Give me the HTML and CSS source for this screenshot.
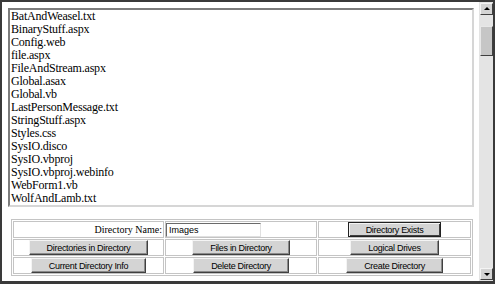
FILE: index.html
```html
<!DOCTYPE html>
<html lang="en">
<head>
    <meta charset="UTF-8">
    <title>SysIO</title>
    <link rel="stylesheet" href="styles.css">
</head>
<body>
    <div class="frame">
        <div class="main">
            <div class="listbox">
                <div>BatAndWeasel.txt</div>
                <div>BinaryStuff.aspx</div>
                <div>Config.web</div>
                <div>file.aspx</div>
                <div>FileAndStream.aspx</div>
                <div>Global.asax</div>
                <div>Global.vb</div>
                <div>LastPersonMessage.txt</div>
                <div>StringStuff.aspx</div>
                <div>Styles.css</div>
                <div>SysIO.disco</div>
                <div>SysIO.vbproj</div>
                <div>SysIO.vbproj.webinfo</div>
                <div>WebForm1.vb</div>
                <div>WolfAndLamb.txt</div>
            </div>

            <div class="controls">
                <div class="cell label-cell">Directory Name:</div>
                <div class="cell left-cell"><input type="text" class="dir-input" value="Images"></div>
                <div class="cell"><button class="btn default">Directory Exists</button></div>

                <div class="cell"><button class="btn">Directories in Directory</button></div>
                <div class="cell"><button class="btn">Files in Directory</button></div>
                <div class="cell"><button class="btn">Logical Drives</button></div>

                <div class="cell"><button class="btn">Current Directory Info</button></div>
                <div class="cell"><button class="btn">Delete Directory</button></div>
                <div class="cell"><button class="btn">Create Directory</button></div>
            </div>
        </div>

        <div class="scrollbar">
            <div class="arrow up"></div>
            <div class="thumb"></div>
            <div class="track"></div>
            <div class="arrow down"></div>
        </div>
    </div>
</body>
</html>
```

FILE: styles.css
```css
/* Page */
body, html {
    margin: 0;
    padding: 0;
    background: #fff;
}

.frame {
    width: 495px;
    height: 284px;
    box-sizing: border-box;
    border: 2px solid #3a3a3a;
    border-bottom-width: 3px;
    display: flex;
    background: #fff;
}

.main {
    flex: 1;
    padding: 6px 5px 0 6px;
}

/* File list box */
.listbox {
    height: 199px;
    box-sizing: border-box;
    border: 2px solid;
    border-color: #7c7c7c #d6d6d6 #d6d6d6 #7c7c7c;
    padding: 0 1px;
    overflow: hidden;
    font-family: "Liberation Serif", serif;
    font-size: 12px;
    line-height: 13px;
    letter-spacing: -0.2px;
    color: #000;
}

/* Button table */
.controls {
    margin: 12px 1px 0 3px;
    border: 1px solid #c4c4c4;
    padding: 1px;
    display: grid;
    grid-template-columns: 151px 152px 1fr;
    grid-auto-rows: 17px;
    gap: 1px;
}

.cell {
    border: 1px solid #c4c4c4;
    display: flex;
    align-items: center;
    justify-content: center;
}

.label-cell {
    justify-content: flex-end;
    padding-right: 1px;
    font-family: "Liberation Serif", serif;
    font-size: 10px;
}

.left-cell {
    justify-content: flex-start;
}

.dir-input {
    width: 95px;
    height: 14px;
    box-sizing: border-box;
    border: 1px solid;
    border-color: #6a6a6a #e0e0e0 #e0e0e0 #6a6a6a;
    padding: 0 2px;
    font-family: "Liberation Sans", sans-serif;
    font-size: 9px;
    outline: none;
}

.btn {
    height: 15px;
    padding: 0 17px;
    background: #d4d4d4;
    border: 1px solid;
    border-color: #f4f4f4 #404040 #404040 #f4f4f4;
    box-shadow: inset -1px -1px 0 #8a8a8a;
    font-family: "Liberation Sans", sans-serif;
    font-size: 9px;
    letter-spacing: -0.3px;
    color: #000;
    line-height: 12px;
}

.btn.default {
    border-color: #202020;
    box-shadow: inset 1px 1px 0 #f4f4f4, inset -1px -1px 0 #404040;
}

/* Scroll bar */
.scrollbar {
    width: 13px;
    background: #e4e4e4;
    display: flex;
    flex-direction: column;
    padding: 1px 0 1px 1px;
}

.arrow {
    height: 10px;
    width: 11px;
    background: #d4d4d4;
    border: 1px solid;
    border-color: #f4f4f4 #404040 #404040 #f4f4f4;
    position: relative;
}

.arrow::after {
    content: "";
    position: absolute;
    left: 3px;
    width: 0;
    height: 0;
    border-left: 3px solid transparent;
    border-right: 3px solid transparent;
}

.arrow.up::after {
    top: 3px;
    border-bottom: 3px solid #000;
}

.arrow.down::after {
    top: 4px;
    border-top: 3px solid #000;
}

.thumb {
    margin-top: 11px;
    height: 28px;
    width: 11px;
    background: #c6c6c6;
    border: 1px solid;
    border-color: #e8e8e8 #404040 #404040 #e8e8e8;
}

.track {
    flex: 1;
}
```
